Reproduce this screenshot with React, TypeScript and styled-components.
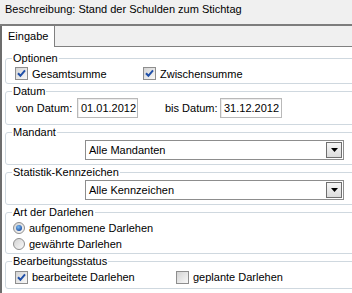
import React, { useId } from 'react';
import styled, { createGlobalStyle } from 'styled-components';

const GlobalStyle = createGlobalStyle`
  html, body {
    margin: 0;
    padding: 0;
    background: #ffffff;
  }
  body {
    font-family: "Liberation Sans", Arial, sans-serif;
    font-size: 11px;
    color: #000000;
  }
`;

const Page = styled.div`
  width: 352px;
  height: 293px;
  overflow: hidden;
  display: flex;
  flex-direction: column;
  background: #f0f0f0;
`;

const TitleBar = styled.div`
  height: 26px;
  padding: 3px 0 0 5px;
  box-sizing: border-box;
  line-height: 13px;
  border-bottom: 2px solid #7d7d7d;
  white-space: nowrap;
`;

const TabStrip = styled.div`
  height: 20px;
  display: flex;
  align-items: flex-end;
  border-bottom: 1px solid #808080;
`;

const Tab = styled.div`
  height: 21px;
  margin-bottom: -1px;
  padding: 0 6px;
  line-height: 20px;
  background: #ffffff;
  border-left: 2px solid #6d6d6d;
  border-right: 1px solid #808080;
  box-sizing: border-box;
`;

const Panel = styled.div`
  flex: 1;
  background: #ffffff;
  border-left: 2px solid #6d6d6d;
  padding: 5px 0 0 3px;
  display: flex;
  flex-direction: column;
  gap: 1px;
`;

const GroupBox = styled.fieldset`
  margin: 0;
  padding: 0;
  width: 360px;
  min-width: 0;
  box-sizing: border-box;
  border: 1px solid #cfd8df;
  border-radius: 3px;
`;

const Legend = styled.legend`
  margin-left: 6px;
  padding: 0 1px;
  line-height: 13px;
  font-size: 11px;
`;

const Body = styled.div<{ $pt: number; $pb: number; $pl: number }>`
  padding: ${p => p.$pt}px 0 ${p => p.$pb}px ${p => p.$pl}px;
`;

const Row = styled.div<{ $h: number }>`
  display: flex;
  align-items: center;
  height: ${p => p.$h}px;
`;

const Option = styled.label<{ $w?: number }>`
  display: flex;
  align-items: center;
  gap: 4px;
  width: ${p => (p.$w ? `${p.$w}px` : 'auto')};
  white-space: nowrap;
  svg {
    flex-shrink: 0;
    display: block;
  }
`;

const DateRow = styled.div`
  display: grid;
  grid-template-columns: 61px 61px 27px 55px 62px;
  align-items: center;
  height: 20px;
  padding-left: 10px;
`;

const DateLabel = styled.span`
  white-space: nowrap;
`;

const DateInput = styled.div`
  height: 20px;
  box-sizing: border-box;
  border: 1px solid #b9b9b9;
  box-shadow: inset 1px 1px 0 #ececec;
  padding-left: 3px;
  line-height: 18px;
  background: #ffffff;
`;

const Combo = styled.div`
  margin-left: 79px;
  width: 259px;
  height: 20px;
  box-sizing: border-box;
  border: 1px solid #8d8d8d;
  padding: 1px;
  display: flex;
  align-items: center;
  background: #ffffff;
`;

const ComboText = styled.span`
  flex: 1;
  padding-left: 2px;
  line-height: 16px;
`;

const ComboButton = styled.div`
  width: 16px;
  height: 16px;
  box-sizing: border-box;
  border: 1px solid #6f6f6f;
  background: linear-gradient(#f6f6f6, #dcdcdc);
  display: flex;
  align-items: center;
  justify-content: center;
`;

const CheckBox: React.FC<{ checked?: boolean }> = ({ checked }) => {
  const id = useId();
  return (
    <svg width="13" height="13" viewBox="0 0 13 13">
      <defs>
        <linearGradient id={id} x1="0" y1="0" x2="1" y2="1">
          <stop offset="0" stopColor="#d2d2d2" />
          <stop offset="1" stopColor="#fafafa" />
        </linearGradient>
      </defs>
      <rect x="0.5" y="0.5" width="12" height="12" fill={`url(#${id})`} stroke="#8e8e8e" />
      {checked && (
        <path d="M3 6.2 L5.4 8.8 L10 3.4" fill="none" stroke="#1f4fa8" strokeWidth="2" />
      )}
    </svg>
  );
};

const Radio: React.FC<{ checked?: boolean }> = ({ checked }) => {
  const id = useId();
  return (
    <svg width="12" height="12" viewBox="0 0 12 12">
      <defs>
        <linearGradient id={`${id}b`} x1="0" y1="0" x2="1" y2="1">
          <stop offset="0" stopColor="#d0d0d0" />
          <stop offset="1" stopColor="#fbfbfb" />
        </linearGradient>
        <radialGradient id={`${id}d`} cx="0.4" cy="0.35" r="0.7">
          <stop offset="0" stopColor="#7fc0f5" />
          <stop offset="1" stopColor="#1a4aa0" />
        </radialGradient>
      </defs>
      <circle cx="6" cy="6" r="5.5" fill={`url(#${id}b)`} stroke="#8e8e8e" />
      {checked && <circle cx="6" cy="6" r="3" fill={`url(#${id}d)`} />}
    </svg>
  );
};

const Arrow = () => (
  <svg width="7" height="4" viewBox="0 0 7 4">
    <path d="M0 0 H7 L3.5 4 Z" fill="#000000" />
  </svg>
);

const App: React.FC = () => {
  return (
    <Page>
      <GlobalStyle />
      <TitleBar>Beschreibung: Stand der Schulden zum Stichtag</TitleBar>
      <TabStrip>
        <Tab>Eingabe</Tab>
      </TabStrip>
      <Panel>
        <GroupBox>
          <Legend>Optionen</Legend>
          <Body $pt={1} $pb={2} $pl={9}>
            <Row $h={15}>
              <Option $w={128}>
                <CheckBox checked />
                Gesamtsumme
              </Option>
              <Option>
                <CheckBox checked />
                Zwischensumme
              </Option>
            </Row>
          </Body>
        </GroupBox>

        <GroupBox>
          <Legend>Datum</Legend>
          <Body $pt={0} $pb={6} $pl={0}>
            <DateRow>
              <DateLabel>von Datum:</DateLabel>
              <DateInput>01.01.2012</DateInput>
              <span />
              <DateLabel>bis Datum:</DateLabel>
              <DateInput>31.12.2012</DateInput>
            </DateRow>
          </Body>
        </GroupBox>

        <GroupBox>
          <Legend>Mandant</Legend>
          <Body $pt={1} $pb={4} $pl={0}>
            <Combo>
              <ComboText>Alle Mandanten</ComboText>
              <ComboButton>
                <Arrow />
              </ComboButton>
            </Combo>
          </Body>
        </GroupBox>

        <GroupBox>
          <Legend>Statistik-Kennzeichen</Legend>
          <Body $pt={1} $pb={4} $pl={0}>
            <Combo>
              <ComboText>Alle Kennzeichen</ComboText>
              <ComboButton>
                <Arrow />
              </ComboButton>
            </Combo>
          </Body>
        </GroupBox>

        <GroupBox>
          <Legend>Art der Darlehen</Legend>
          <Body $pt={1} $pb={1} $pl={7}>
            <Row $h={16}>
              <Option>
                <Radio checked />
                aufgenommene Darlehen
              </Option>
            </Row>
            <Row $h={16}>
              <Option>
                <Radio />
                gewährte Darlehen
              </Option>
            </Row>
          </Body>
        </GroupBox>

        <GroupBox>
          <Legend>Bearbeitungsstatus</Legend>
          <Body $pt={1} $pb={3} $pl={9}>
            <Row $h={16}>
              <Option $w={161}>
                <CheckBox checked />
                bearbeitete Darlehen
              </Option>
              <Option>
                <CheckBox />
                geplante Darlehen
              </Option>
            </Row>
          </Body>
        </GroupBox>
      </Panel>
    </Page>
  );
};

export default App;
